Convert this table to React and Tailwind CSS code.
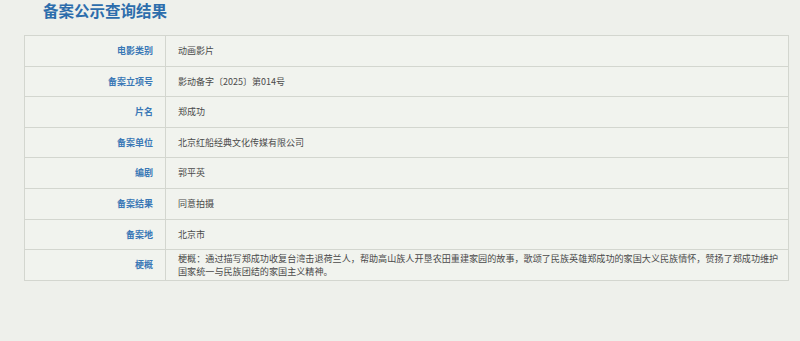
export default function App() {
  const rows = [
    ["电影类别", "动画影片"],
    ["备案立项号", "影动备字〔2025〕第014号"],
    ["片名", "郑成功"],
    ["备案单位", "北京红船经典文化传媒有限公司"],
    ["编剧", "郭平英"],
    ["备案结果", "同意拍摄"],
    ["备案地", "北京市"],
  ];
  const font = { fontFamily: '"Noto Sans CJK SC", "Noto Sans", sans-serif' };
  return (
    <div className="w-full h-[341px] bg-[#eef0eb]" style={font}>
      <div className="pl-[43px] pt-[1px] h-[35px]">
        <h1 className="text-[15.5px] leading-[18px] font-bold text-[#2c6dac]">备案公示查询结果</h1>
      </div>
      <div className="ml-[24px] w-[765px]">
        <table className="w-full border-collapse border border-[#d3d6cf] bg-[#f1f3ee]">
          <tbody>
            {rows.map(([k, v]) => (
              <tr key={k} className="h-[30.6px]">
                <td className="w-[141px] border border-[#d3d6cf] pr-[12px] text-right text-[9px] font-bold text-[#3a78b6] align-middle">{k}</td>
                <td className="border border-[#d3d6cf] pl-[12px] text-[9px] text-[#4a4a4a] align-middle">{v}</td>
              </tr>
            ))}
            <tr className="h-[31px]">
              <td className="w-[141px] border border-[#d3d6cf] pr-[12px] text-right text-[9px] font-bold text-[#3a78b6] align-middle">梗概</td>
              <td className="border border-[#d3d6cf] pl-[12px] pr-0 py-0 text-[9.1px] leading-[13.2px] text-[#4a4a4a] align-middle">
                梗概：通过描写郑成功收复台湾击退荷兰人，帮助高山族人开垦农田重建家园的故事，歌颂了民族英雄郑成功的家国大义民族情怀，赞扬了郑成功维护<br />国家统一与民族团结的家国主义精神。
              </td>
            </tr>
          </tbody>
        </table>
      </div>
    </div>
  );
}
